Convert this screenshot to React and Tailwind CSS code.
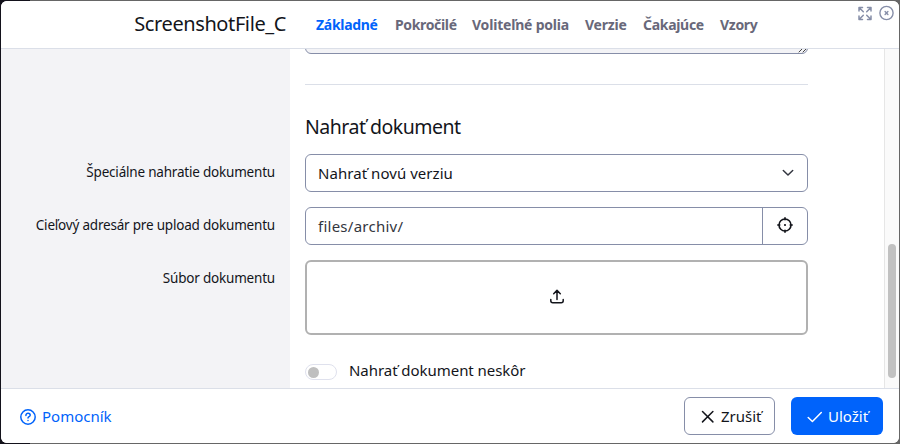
import React from "react";

const tabs = [
  ["Základné", "w-[63px] tracking-[-0.3px] text-[#0063fb]"],
  ["Pokročilé", "w-[61px] tracking-[-0.35px] text-[#68687a]"],
  ["Voliteľné polia", "w-[97px] tracking-[-0.2px] text-[#68687a]"],
  ["Verzie", "w-[42px] tracking-[-0.2px] text-[#68687a]"],
  ["Čakajúce", "w-[61px] tracking-[-0.3px] text-[#68687a]"],
  ["Vzory", "w-[38px] tracking-[-0.3px] text-[#68687a]"],
];

function Icon({ size, className = "", stroke = 1.5, children }) {
  return (
    <svg
      width={size}
      height={size}
      viewBox={`0 0 ${size} ${size}`}
      fill="none"
      stroke="currentColor"
      strokeWidth={stroke}
      strokeLinecap="round"
      strokeLinejoin="round"
      className={`block shrink-0 ${className}`}
    >
      {children}
    </svg>
  );
}

function Row({ label, className = "", children }) {
  return (
    <div className={`flex ${className}`}>
      <div className="w-[289px] shrink-0 pr-[15px] pt-[8px] text-right text-[13.5px] leading-[20px] tracking-[-0.2px] whitespace-nowrap">
        {label}
      </div>
      <div className="ml-[15px] w-[503px] shrink-0">{children}</div>
    </div>
  );
}

function Header() {
  return (
    <header className="flex h-12 shrink-0 border-b border-[#dbdfe8] bg-white">
      <h1 className="w-[285px] shrink-0 pt-[9px] text-right text-[20px] leading-[28px] tracking-[-0.4px]">
        ScreenshotFile_C
      </h1>
      <nav className="ml-[30px] flex gap-4 pt-[14px] text-[14px] leading-[20px] font-bold whitespace-nowrap">
        {tabs.map(([name, cls]) => (
          <a key={name} className={cls}>
            {name}
          </a>
        ))}
      </nav>
      <div className="ml-auto flex gap-[5px] pt-[4px] pr-[5px] text-[#868ea8]">
        <Icon size={16} stroke={1.5}>
          <path d="M2 6V2.500h3.500M2.300 2.800l4 4M10.500 2.500H14V6M13.700 2.800l-4 4M2 11v3.500h3.500M2.300 14.200l4-4M10.500 14.500H14V11M13.700 14.200l-4-4" />
        </Icon>
        <Icon size={16} stroke={1.4}>
          <circle cx="8.500" cy="8" r="6.600" />
          <path d="M7.100 6.600l2.800 2.800M9.900 6.600L7.100 9.400" />
        </Icon>
      </div>
    </header>
  );
}

function Content() {
  return (
    <main className="flex h-[339px] shrink-0 bg-white">
      <div className="w-[883px] shrink-0 overflow-hidden bg-[linear-gradient(to_right,#f3f3f6_289px,#fff_289px)]">
        <div className="ml-[304px] flex h-[5px] w-[503px] items-end overflow-hidden">
          <div className="flex h-10 w-full shrink-0 items-end justify-end rounded-[6px] border border-[#868ea8] bg-[#f3f3f6]">
            <Icon size={9} stroke={1} className="h-[9px] text-[#444]">
              <path d="M1 8l6-6M5 8l3-3" />
            </Icon>
          </div>
        </div>
        <div className="mt-[30px] ml-[304px] h-px w-[503px] bg-[#dbdfe8]" />
        <h2 className="mt-[28px] ml-[304px] text-[19.5px] leading-[28px] tracking-[-0.5px]">Nahrať dokument</h2>
        <Row label="Špeciálne nahratie dokumentu" className="mt-[13px]">
          <div className="flex h-[38px] items-center justify-between rounded-[6px] border border-[#868ea8] pr-[12px] pl-[12px] text-[15px]">
            <span className="tracking-[0.05px]">Nahrať novú verziu</span>
            <Icon size={14} className="text-[#333640]">
              <path d="M2.300 4.500L7 9l4.700-4.500" />
            </Icon>
          </div>
        </Row>
        <Row label="Cieľový adresár pre upload dokumentu" className="mt-[15px]">
          <div className="flex h-[38px] rounded-[6px] border border-[#868ea8] text-[15px]">
            <div className="flex flex-1 items-center pl-[12px] tracking-[0.25px] text-[#333640]">files/archiv/</div>
            <div className="flex w-[45px] items-center justify-center border-l border-[#868ea8]">
              <Icon size={18} stroke={1.6} className="mb-[2px]">
                <circle cx="9" cy="9" r="6" />
                <path d="M9 1.800v2M9 14.200v2M1.800 9h2M14.200 9h2" />
                <circle cx="9" cy="9" r="1.100" fill="currentColor" stroke="none" />
              </Icon>
            </div>
          </div>
        </Row>
        <Row label="Súbor dokumentu" className="mt-[15px]">
          <div className="flex h-[75px] items-center justify-center rounded-[6px] border-2 border-[#b1b1b1]">
            <Icon size={16} className="mb-[2px]">
              <path d="M8 10.500V1.800M4.700 4.700L8 1.400l3.300 3.300M1.800 10.500v1.300q0 2 2 2h8.400q2 0 2-2v-1.300" />
            </Icon>
          </div>
        </Row>
        <div className="mt-[24px] ml-[304px] flex items-start">
          <div className="mt-[5px] flex h-4 w-8 items-center rounded-full border border-[#dfe1ed] pl-[2px]">
            <div className="size-[11px] rounded-full bg-[#bfbfbf]" />
          </div>
          <span className="ml-[12px] text-[15px] leading-[22px] tracking-[-0.05px]">Nahrať dokument neskôr</span>
        </div>
      </div>
      <div className="flex w-[15px] shrink-0 border-l border-[#e6e6e6] bg-[#fafafa] pt-[195px] pl-[3px]">
        <div className="h-[134px] w-2 rounded-full bg-[#c1c1c1]" />
      </div>
    </main>
  );
}

function Footer() {
  return (
    <footer className="flex flex-1 border-t border-[#dbdfe8] bg-white pr-[16px] pl-[19px] text-[15px]">
      <a className="mt-[16px] flex h-[22px] items-center text-[#0063fb]">
        <Icon size={16} className="mt-[2px]">
          <circle cx="8" cy="8" r="7.200" />
          <path d="M5.900 6.400c0-2.800 4.300-2.600 4.300-.2C10.200 7.600 8 7.800 8 9M8 11.500v.1" />
        </Icon>
        <span className="ml-[6px]">Pomocník</span>
      </a>
      <button className="mt-[8px] ml-auto flex h-[38px] w-[91px] items-center rounded-[6px] border border-[#868ea8] pl-[16px]">
        <Icon size={14} className="mt-[2px]">
          <path d="M1.500 1.500l10.400 10.400M11.900 1.500L1.500 11.900" />
        </Icon>
        <span className="ml-[6px]">Zrušiť</span>
      </button>
      <button className="mt-[8px] ml-[16px] flex h-[38px] w-[92px] items-center rounded-[6px] bg-[#0063fb] pl-[16px] text-white">
        <Icon size={16} className="mt-[2px]">
          <path d="M1.200 8.500l4.200 4L14.300 3.500" />
        </Icon>
        <span className="ml-[5px]">Uložiť</span>
      </button>
    </footer>
  );
}

export default function App() {
  return (
    <div className="h-[444px] w-[900px] overflow-hidden bg-[linear-gradient(to_right,#13121b_30px,#666_30px)] p-px font-['Noto_Sans',sans-serif] text-[#13151b]">
      <div className="flex h-[442px] w-[898px] flex-col overflow-hidden rounded-[6px] bg-white">
        <Header />
        <Content />
        <Footer />
      </div>
    </div>
  );
}
